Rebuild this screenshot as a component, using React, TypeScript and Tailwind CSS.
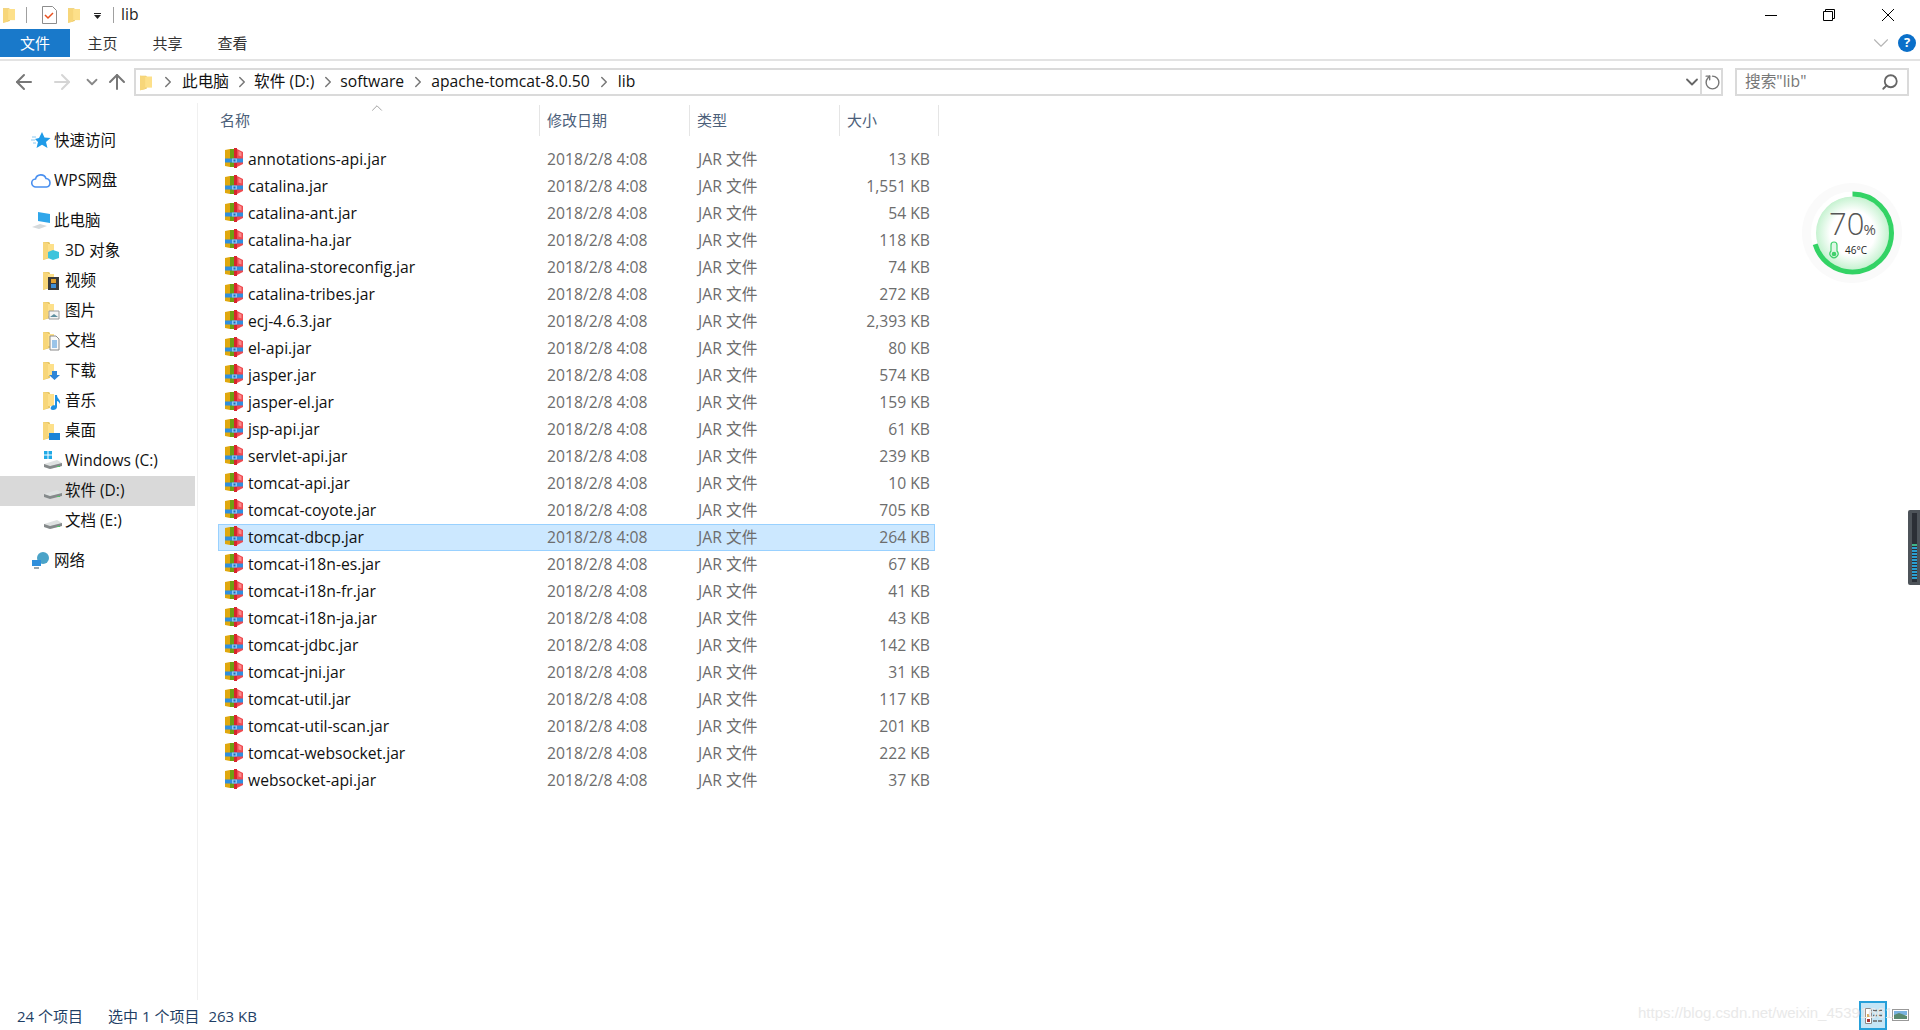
import React from 'react';
import { ArrowLeft, ArrowRight, ArrowUp, ChevronDown, ChevronRight, ChevronUp, RotateCw, Search } from 'lucide-react';

const files = [
  ['annotations-api.jar', '13 KB'],
  ['catalina.jar', '1,551 KB'],
  ['catalina-ant.jar', '54 KB'],
  ['catalina-ha.jar', '118 KB'],
  ['catalina-storeconfig.jar', '74 KB'],
  ['catalina-tribes.jar', '272 KB'],
  ['ecj-4.6.3.jar', '2,393 KB'],
  ['el-api.jar', '80 KB'],
  ['jasper.jar', '574 KB'],
  ['jasper-el.jar', '159 KB'],
  ['jsp-api.jar', '61 KB'],
  ['servlet-api.jar', '239 KB'],
  ['tomcat-api.jar', '10 KB'],
  ['tomcat-coyote.jar', '705 KB'],
  ['tomcat-dbcp.jar', '264 KB'],
  ['tomcat-i18n-es.jar', '67 KB'],
  ['tomcat-i18n-fr.jar', '41 KB'],
  ['tomcat-i18n-ja.jar', '43 KB'],
  ['tomcat-jdbc.jar', '142 KB'],
  ['tomcat-jni.jar', '31 KB'],
  ['tomcat-util.jar', '117 KB'],
  ['tomcat-util-scan.jar', '201 KB'],
  ['tomcat-websocket.jar', '222 KB'],
  ['websocket-api.jar', '37 KB'],
];

const Folder = ({ className }: { className?: string }) => (
  <svg viewBox="0 0 14 18" className={className}>
    <path d="M0 1h7l1 1v14l-8 2z" fill="#e8c766" />
    <path d="M3 2h11v13H3z" fill="#fde08a" />
    <path d="M0 1l6 1v15l-6 1z" fill="#f7d67a" />
  </svg>
);

const JarIcon = () => (
  <svg viewBox="0 0 18 20" className="-mt-[3px] h-5 w-[18px] shrink-0">
    <path d="M0 2l5-1v18l-5-1z" fill="#e0a80e" />
    <path d="M5 1h4v18H5z" fill="#6f9f12" />
    <path d="M9 0h3v20H9z" fill="#d8262e" />
    <path d="M12 1l6 3v12l-6 3z" fill="#ef4a50" />
    <path d="M13.500 3l3 1.500v4l-3-1z" fill="#f88a8a" />
    <path d="M0 10.500h18v4H0z" fill="#2f8fe0" />
    <path d="M7 10.500h5v4H7z" fill="#8cc6f2" />
    <path d="M8.500 11.500h2v2h-2z" fill="#1f6fb8" />
  </svg>
);

const Drive = ({ windows }: { windows?: boolean }) => (
  <svg viewBox="0 0 20 20" className="h-5 w-5">
    {windows && (
      <g fill="#1fa9e6">
        <path d="M1 0h3.500v3.500H1zM5.500 0H9v3.500H5.500zM1 4.500h3.500V8H1zM5.500 4.500H9V8H5.500z" />
      </g>
    )}
    <path d="M1 13l13-4 5 3v3l-12 3-6-2z" fill="#dfe2e2" />
    <path d="M1 13l6 2 12-3v3l-12 3-6-2z" fill="#858a8b" />
    <path d="M14 15h3v1h-3z" fill="#55c26a" />
  </svg>
);

const special: Record<string, React.ReactNode> = {
  '3D 对象': <path d="M5 11l5-2 6 2v6l-6 2-5-2z" fill="#3fc4dc" />,
  视频: (
    <g>
      <path d="M5 6h11v13H5z" fill="#3a3a3a" />
      <path d="M8 8h5v4H8z" fill="#e0a030" />
      <path d="M8 13h5v4H8z" fill="#3d8ed6" />
    </g>
  ),
  图片: (
    <g>
      <path d="M6 10h10v8H6z" fill="#f4f4f4" stroke="#9a9a9a" />
      <path d="M7 16l4-3 4 3z" fill="#5f8f9f" />
    </g>
  ),
  文档: (
    <g>
      <path d="M7 5h6l3 3v11H7z" fill="#fafafa" stroke="#8a8a8a" />
      <path d="M9 10h5M9 12h5M9 14h5M9 16h5" stroke="#3d8ed6" />
    </g>
  ),
  下载: <path d="M9 10h5v4h3l-5.500 5-5.500-5h3z" fill="#2f86d8" />,
  音乐: <path d="M12 4h2c0 4 4 4 3 9-1-2-2-3-3-3v6c0 2-2 3-4 3s-3-1-2-3 3-2 4-1.500z" fill="#1c90e2" />,
  桌面: <path d="M6 12h11v7H6z" fill="#1c84d8" />,
};

const LibFolder = ({ name }: { name: string }) => (
  <svg viewBox="0 0 20 20" className="h-5 w-5">
    <path d="M0 1h6l1 1v15l-7 2z" fill="#e8c766" />
    <path d="M2 3h9v12H2z" fill="#fde08a" />
    <path d="M0 1l5 1v15l-5 2z" fill="#f7d67a" />
    {special[name]}
  </svg>
);

const NavRow = ({ label, icon, indent, active, gap }: { label: string; icon: React.ReactNode; indent?: boolean; active?: boolean; gap?: boolean }) => (
  <div className={`flex h-[30px] w-[195px] items-center ${indent ? 'pl-[43px]' : 'pl-[31px]'} ${active ? 'bg-[#d9d9d9]' : ''} ${gap ? 'mt-[10px]' : ''}`}>
    <span className="flex h-5 w-5 items-center justify-center">{icon}</span>
    <span className={`${indent ? 'ml-[2px]' : 'ml-[3px]'} text-[15.500px] text-[#111]`}>{label}</span>
  </div>
);

const Sidebar = () => (
  <div className="h-full w-[198px] shrink-0 border-r border-[#f0f0f0] pt-[23px]">
    <NavRow
      label="快速访问"
      icon={
        <svg viewBox="0 0 20 20" className="h-5 w-5">
          <path d="M11 1l2.500 5.500 6 .5-4.500 4 1.500 6-5.500-3.200-5.500 3.200 1.500-6-3-3 4-1z" fill="#1f9be8" />
          <path d="M1 6h4M0 9h4M2 12h3" stroke="#8cc8f0" />
        </svg>
      }
    />
    <NavRow
      label="WPS网盘"
      gap
      icon={
        <svg viewBox="0 0 20 20" className="h-5 w-5">
          <path d="M5 16a4 4 0 0 1-.5-8 5.500 5.500 0 0 1 10.500-.5 4.300 4.300 0 0 1 .5 8.500z" fill="none" stroke="#4a90f0" strokeWidth="1.600" />
        </svg>
      }
    />
    <NavRow
      label="此电脑"
      gap
      icon={
        <svg viewBox="0 0 20 20" className="h-5 w-5">
          <path d="M7 1l12 2v9L7 10z" fill="#2fa6ea" />
          <path d="M1 16l8-3 7 2-8 3z" fill="#d6dadc" />
        </svg>
      }
    />
    {['3D 对象', '视频', '图片', '文档', '下载', '音乐', '桌面'].map((n) => (
      <NavRow key={n} label={n} indent icon={<LibFolder name={n} />} />
    ))}
    <NavRow label="Windows (C:)" indent icon={<Drive windows />} />
    <NavRow label="软件 (D:)" indent active icon={<Drive />} />
    <NavRow label="文档 (E:)" indent icon={<Drive />} />
    <NavRow
      label="网络"
      gap
      icon={
        <svg viewBox="0 0 20 20" className="h-5 w-5">
          <circle cx="12" cy="7" r="6" fill="#4aa3c8" />
          <path d="M1 9l9 0v6H1z" fill="#2f8fdc" />
          <path d="M3 16h5v2H3z" fill="#9aa6ac" />
        </svg>
      }
    />
  </div>
);

const Gauge = () => (
  <div className="absolute left-[1802px] top-[183px] h-[100px] w-[100px] rounded-full bg-[#fafafa]">
    <svg viewBox="0 0 100 100" className="h-full w-full">
      <defs>
        <radialGradient id="g">
          <stop offset="60%" stopColor="#ffffff" />
          <stop offset="100%" stopColor="#c4f2cf" />
        </radialGradient>
      </defs>
      <circle cx="50.500" cy="50" r="37" fill="url(#g)" />
      <circle cx="50.500" cy="50" r="39" fill="none" stroke="#ffffff" strokeWidth="5" />
      <circle cx="50.500" cy="50" r="39" fill="none" stroke="#33d365" strokeWidth="5" strokeDasharray="172 245" transform="rotate(-90 50.500 50)" />
      <path d="M29 68a4 4 0 1 0 6 0v-6a3 3 0 0 0-6 0z" fill="#dff7e5" stroke="#3fd06c" strokeWidth="1.200" />
      <circle cx="32" cy="71" r="2.300" fill="#3fd06c" />
    </svg>
    <div className="absolute left-[27px] top-[25px] flex items-baseline text-[#555]">
      <span className="text-[31px] font-light leading-none">70</span>
      <span className="-ml-px text-[15px] leading-none">%</span>
    </div>
    <span className="absolute left-[43px] top-[60px] text-[10px] font-medium text-[#222]">46°C</span>
  </div>
);

export default function App() {
  return (
    <div className="relative flex h-[1030px] w-[1920px] flex-col overflow-hidden bg-white font-['Open_Sans','Noto_Sans_CJK_SC',sans-serif]">
      {/* title bar */}
      <div className="flex h-[29px] shrink-0 items-center">
        <Folder className="ml-[3px] h-[18px] w-[12px]" />
        <div className="ml-[11px] h-[16px] w-px bg-[#a0a0a0]" />
        <svg viewBox="0 0 15 18" className="ml-[15px] h-[18px] w-[15px]">
          <path d="M.5.500h10l4 4v13H.5z" fill="#fff" stroke="#8d8d8d" />
          <path d="M3 9l3 3 5-5" fill="none" stroke="#e8501f" strokeWidth="1.500" />
        </svg>
        <Folder className="ml-[11px] h-[18px] w-[12px]" />
        <svg viewBox="0 0 7 6" className="ml-[14px] mt-[2px] h-[6px] w-[7px]">
          <path d="M0 0h7v1H0zM0 2h7L3.500 6z" fill="#222" />
        </svg>
        <div className="ml-[12px] h-[16px] w-px bg-[#a0a0a0]" />
        <span className="ml-[7px] text-[15.700px] text-[#222]">lib</span>
        <div className="ml-auto flex items-center">
          <svg viewBox="0 0 12 12" className="mr-[46px] h-[12px] w-[12px]">
            <path d="M0 6.500h12" stroke="#000" />
          </svg>
          <svg viewBox="0 0 12 12" className="mr-[47px] h-[12px] w-[12px]">
            <path d="M.5 2.500h9v9h-9zM2.500 2.500v-2h9v9h-2" fill="none" stroke="#000" />
          </svg>
          <svg viewBox="0 0 12 12" className="mr-[26px] h-[12px] w-[12px]">
            <path d="M0 0l12 12M12 0L0 12" stroke="#000" />
          </svg>
        </div>
      </div>
      {/* ribbon tabs */}
      <div className="flex h-[32px] shrink-0 items-start border-b-2 border-[#e3e3e3]">
        <div className="flex h-[28px] w-[70px] items-center justify-center bg-[#1979ca] text-[15px] text-white">文件</div>
        <div className="flex h-[28px] w-[65px] items-center justify-center pt-[1px] text-[15px] text-[#333]">主页</div>
        <div className="flex h-[28px] w-[65px] items-center justify-center pt-[1px] text-[15px] text-[#333]">共享</div>
        <div className="flex h-[28px] w-[65px] items-center justify-center pt-[1px] text-[15px] text-[#333]">查看</div>
        <div className="ml-auto flex h-[28px] items-center pr-[4px]">
          <ChevronDown className="mr-[4px] h-[26px] w-[26px] text-[#b5b5b5]" strokeWidth={1} />
          <div className="flex h-[18px] w-[18px] items-center justify-center rounded-full bg-[#0a6fc9] text-[13px] font-bold text-white">?</div>
        </div>
      </div>
      {/* address row */}
      <div className="flex h-[42px] shrink-0 items-center">
        <div className="flex w-[134px] items-center pl-[12px]">
          <ArrowLeft className="h-6 w-6 text-[#777]" strokeWidth={2} />
          <ArrowRight className="ml-[14px] h-6 w-6 text-[#d5d5d5]" strokeWidth={2} />
          <ChevronDown className="ml-[9px] h-[18px] w-[18px] text-[#888]" strokeWidth={2.400} />
          <ArrowUp className="ml-[4px] h-6 w-6 text-[#777]" strokeWidth={2} />
        </div>
        <div className="flex h-[28px] w-[1589px] items-center border-2 border-[#dadada] text-[15.700px] text-[#111]">
          <Folder className="ml-[4px] h-[17px] w-[12px]" />
          <ChevronRight className="ml-[7px] h-[18px] w-[18px] text-[#777]" />
          <span className="ml-[5px]">此电脑</span>
          <ChevronRight className="ml-[4px] h-[18px] w-[18px] text-[#777]" />
          <span className="ml-[3px]">软件 (D:)</span>
          <ChevronRight className="ml-[5px] h-[18px] w-[18px] text-[#777]" />
          <span className="ml-[3px]">software</span>
          <ChevronRight className="ml-[5px] h-[18px] w-[18px] text-[#777]" />
          <span className="ml-[4px]">apache-tomcat-8.0.50</span>
          <ChevronRight className="ml-[5px] h-[18px] w-[18px] text-[#777]" />
          <span className="ml-[5px]">lib</span>
          <ChevronDown className="-mr-[2px] ml-auto h-5 w-5 text-[#666]" strokeWidth={2.200} />
          <div className="flex h-full w-[21px] items-center justify-center border-l-2 border-[#dadada] pl-[2px]">
            <RotateCw className="h-[19px] w-[19px] -rotate-90 text-[#777]" strokeWidth={2} />
          </div>
        </div>
        <div className="ml-[12px] flex h-[28px] w-[174px] items-center border-2 border-[#dadada] pl-[8px] pr-[8px] text-[15.700px] text-[#777]">
          <span>搜索"lib"</span>
          <Search className="ml-auto h-[18px] w-[18px] -scale-x-100 text-[#666]" strokeWidth={2.400} />
        </div>
      </div>
      {/* body */}
      <div className="flex min-h-0 flex-1">
        <Sidebar />
        <div className="relative w-[741px] pl-[20px]">
          <ChevronUp className="absolute left-[170px] -top-[4px] h-[18px] w-[18px] text-[#999]" strokeWidth={1.200} />
          <div className="flex h-[35px] items-center text-[15px] text-[#4c607a]">
            <div className="h-[31px] w-[321px] pl-[2px] leading-[31px]">名称</div>
            <div className="h-[31px] w-[150px] border-l border-[#e5e5e5] pl-[7px] leading-[31px]">修改日期</div>
            <div className="h-[31px] w-[150px] border-l border-[#e5e5e5] pl-[7px] leading-[31px]">类型</div>
            <div className="h-[31px] w-[100px] border-x border-[#e5e5e5] pl-[7px] leading-[31px]">大小</div>
          </div>
          <div className="mt-[8px] w-[717px]">
            {files.map(([name, size]) => {
              const selected = name === 'tomcat-dbcp.jar';
              return (
                <div
                  key={name}
                  className={`flex h-[27px] items-center border text-[15.700px] ${selected ? 'border-[#99d1ff] bg-[#cce8ff]' : 'border-transparent'}`}
                >
                  <span className="ml-[6px]"><JarIcon /></span>
                  <span className="ml-[5px] w-[299px] text-[#111]">{name}</span>
                  <span className="ml-[4px] w-[153px] text-[#6d6d6d]">2018/2/8 4:08</span>
                  <span className="w-[100px] text-[#6d6d6d]">JAR 文件</span>
                  <span className="w-[139px] pr-[4px] text-right text-[#6d6d6d]">{size}</span>
                </div>
              );
            })}
          </div>
        </div>
      </div>
      {/* status bar */}
      <div className="flex h-[30px] shrink-0 items-center pl-[17px] text-[15px] text-[#1f3f66]">
        <span className="pt-[2px]">24 个项目</span>
        <span className="ml-[25px] pt-[2px]">选中 1 个项目</span>
        <span className="ml-[9px] pt-[2px]">263 KB</span>
        <div className="ml-auto flex items-center pr-[11px]">
          <div className="mt-[1px] flex h-[29px] w-[28px] items-center justify-center border-2 border-[#26a0da] bg-[#c4e5f6]">
            <svg viewBox="0 0 20 16" className="h-[16px] w-[20px]">
              <path d="M2.500.500h6v15h-6z" fill="#fff" stroke="#8a8a8a" />
              <path d="M4 11h3v3H4z" fill="#a33" />
              <path d="M4 6h3v3H4z" fill="#d9b05a" />
              <path d="M10 2.500h9M10 7.500h9M10 13h9" stroke="#666" strokeWidth="1.300" strokeDasharray="4 1" />
            </svg>
          </div>
          <svg viewBox="0 0 17 12" className="ml-[5px] h-[12px] w-[17px]">
            <rect x=".5" y=".5" width="16" height="11" fill="#fff" stroke="#999" />
            <path d="M2 2h13v4H2z" fill="#7ab3e0" />
            <path d="M2 6l5-2 8 3v3H2z" fill="#5a8a70" />
          </svg>
        </div>
      </div>
      {/* overlays */}
      <Gauge />
      <div className="absolute left-[1908px] top-[510px] h-[75px] w-[12px] rounded-l-[2px] bg-[#4d5359] p-[3px] pr-0">
        <div className="ml-[1px] flex h-full w-[5px] flex-col justify-end gap-px bg-[#2b2f36] pb-[3px]">
          {[0, 1, 2, 3, 4, 5, 6, 7, 8, 9, 10, 11].map((i) => (
            <div key={i} className={`h-[2px] ${i === 0 ? 'bg-[#3fb58a]' : 'bg-[#2a9fd0]'}`} />
          ))}
        </div>
      </div>
      <div className="absolute left-[1638px] top-[1002px] font-['Liberation_Sans',sans-serif] text-[15px] text-[#e9e9e9]">https://blog.csdn.net/weixin_45391661</div>
    </div>
  );
}
